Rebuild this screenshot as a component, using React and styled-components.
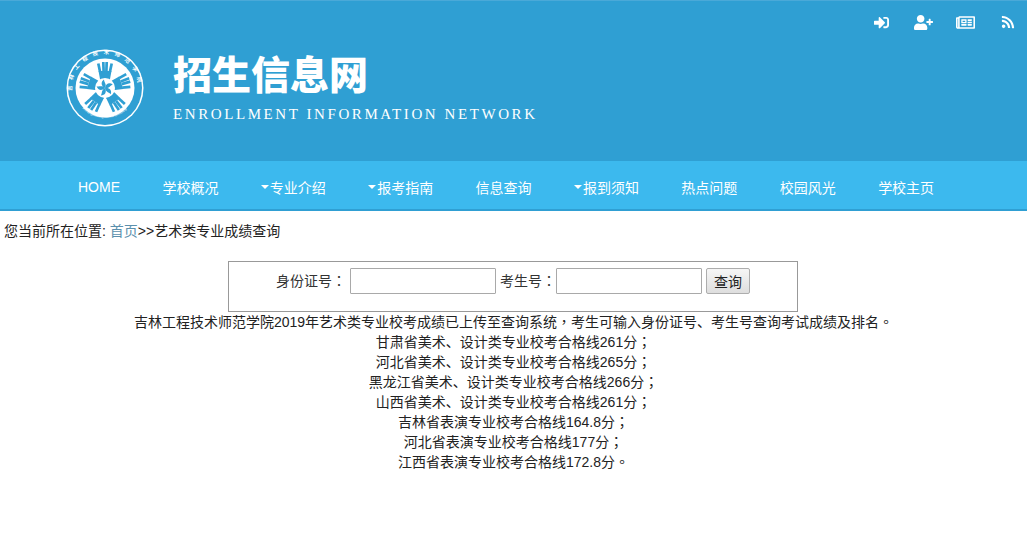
import styled, { createGlobalStyle } from "styled-components";
import { FaSignInAlt, FaUserPlus, FaRegNewspaper, FaRss } from "react-icons/fa";

const blueDark = "#2f9fd3";
const blueLight = "#3cb9ee";

const GlobalStyle = createGlobalStyle`
  body {
    margin: 0;
    background: #fff;
    color: #222;
    font-family: "Liberation Sans", "Noto Sans CJK SC", sans-serif;
    font-size: 14px;
  }
`;

const Header = styled.header`
  box-sizing: border-box;
  height: 161px;
  padding-top: 1px;
  background: ${blueDark};
  border-top: 1px solid #4aa9d8;
`;

const TopIcons = styled.div`
  display: flex;
  justify-content: flex-end;
  align-items: center;
  height: 40px;
  color: #fff;
`;

const TopIcon = styled.a`
  display: flex;
  justify-content: center;
  width: ${(p) => p.$w}px;
  font-size: ${(p) => p.$size || 16}px;
`;

const Brand = styled.div`
  display: flex;
  align-items: flex-start;
  padding: 7px 0 0 66px;
`;

const BrandText = styled.div`
  margin-left: 29px;
  color: #fff;
`;

const BrandTitle = styled.h1`
  margin: -2px 0 0;
  font-family: "Noto Sans CJK SC", sans-serif;
  font-size: 39px;
  line-height: 50px;
  font-weight: 900;
`;

const BrandSub = styled.div`
  margin-top: 8px;
  font-family: "Liberation Serif", serif;
  font-size: 15px;
  line-height: 18px;
  letter-spacing: 2.58px;
  white-space: nowrap;
`;

const Nav = styled.nav`
  box-sizing: border-box;
  display: flex;
  align-items: center;
  gap: 42.4px;
  height: 50px;
  padding: 3px 0 0 78px;
  background: ${blueLight};
  border-bottom: 2px solid ${blueDark};
`;

const NavItem = styled.a`
  display: flex;
  align-items: center;
  color: #fff;
  font-size: 14px;
  white-space: nowrap;
`;

const Caret = styled.i`
  width: 0;
  height: 0;
  margin-right: 1px;
  border-left: 4px solid transparent;
  border-right: 4px solid transparent;
  border-top: 4px solid #fff;
`;

const Crumbs = styled.div`
  padding: 10px 0 0 4px;
  line-height: 20px;
  font-size: 14px;
  color: #222;
`;

const CrumbLink = styled.a`
  color: #5b90ad;
`;

const SearchBox = styled.form`
  box-sizing: border-box;
  display: flex;
  align-items: flex-start;
  width: 570px;
  height: 51px;
  margin: 20px 0 0 228px;
  padding: 6px 0 0 47px;
  border: 1px solid #999;
`;

const FieldLabel = styled.label`
  line-height: 26px;
  font-size: 14px;
  color: #333;
  white-space: nowrap;
  margin-right: ${(p) => p.$gap}px;
`;

const Field = styled.input`
  box-sizing: border-box;
  width: 146px;
  height: 26px;
  margin-right: 4px;
  padding: 0 4px;
  border: 1px solid #a9a9a9;
  border-radius: 1px;
  background: #fff;
`;

const SearchButton = styled.button`
  box-sizing: border-box;
  width: 44px;
  height: 26px;
  padding: 0;
  border: 1px solid #adadad;
  border-radius: 2px;
  background: linear-gradient(#f6f6f6, #dedede);
  color: #222;
  font: inherit;
  font-size: 14px;
`;

const Notice = styled.div`
  text-align: center;
  font-size: 14px;
  line-height: 20px;
  color: #222;
`;

const NoticeLine = styled.div`
  height: 20px;
`;

// the TC cut centres full width punctuation, as the reference does
const Punct = styled.span`
  font-family: "Noto Sans CJK TC", sans-serif;
  line-height: 1;
`;

const navItems = [
  { label: "HOME" },
  { label: "学校概况" },
  { label: "专业介绍", caret: true },
  { label: "报考指南", caret: true },
  { label: "信息查询" },
  { label: "报到须知", caret: true },
  { label: "热点问题" },
  { label: "校园风光" },
  { label: "学校主页" },
];

const notices = [
  "吉林工程技术师范学院2019年艺术类专业校考成绩已上传至查询系统，考生可输入身份证号、考生号查询考试成绩及排名。",
  "甘肃省美术、设计类专业校考合格线261分；",
  "河北省美术、设计类专业校考合格线265分；",
  "黑龙江省美术、设计类专业校考合格线266分；",
  "山西省美术、设计类专业校考合格线261分；",
  "吉林省表演专业校考合格线164.8分；",
  "河北省表演专业校考合格线177分；",
  "江西省表演专业校考合格线172.8分。",
];

const withPunct = (text) =>
  text
    .split(/([，；。：])/)
    .map((part, i) => (i % 2 ? <Punct key={i}>{part}</Punct> : part));

const spokes = [0, 72, 144, 216, 288];

// one hand, fingers outward, palm narrowing to the middle of the badge
const Hand = ({ angle }) => (
  <g transform={`rotate(${angle} 39 39)`}>
    <path d="M32.5 22 h13 l-1.5 8 -3 4 h-4 l-3-4z" fill={blueDark} />
    <g stroke={blueDark} strokeWidth="2.7">
      <path d="M32.3 14.5 l1.7 8" />
      <path d="M37.3 13 l.3 9" />
      <path d="M40.7 13 l-.3 9" />
      <path d="M45.7 14.5 l-1.7 8" />
    </g>
  </g>
);

const Blade = ({ angle }) => (
  <path
    transform={`rotate(${angle} 39 39)`}
    d="M39 39 C35 37 34.5 33 38 30.5 C38 33.5 41 35 39 39z"
    fill={blueDark}
  />
);

const Logo = () => (
  <svg width="78" height="78" viewBox="0 0 78 78">
    <circle cx="39" cy="39" r="38.5" fill="#fff" />
    <circle cx="39" cy="39" r="37" fill={blueDark} />
    <circle cx="39" cy="39" r="29.5" fill="#fff" />
    <defs>
      <path id="ring-top" d="M6.5 44 A33 33 0 1 1 71.5 44" />
      <path id="ring-bottom" d="M11 52 A31.5 31.5 0 0 0 67 52" />
    </defs>
    <text fill="#fff" fontSize="5.4" fontWeight="700" fontFamily="Noto Sans CJK SC, sans-serif" letterSpacing="5.4">
      <textPath href="#ring-top" startOffset="2">吉林工程技术师范学院</textPath>
    </text>
    <text fill="#fff" fontSize="3.2" fontFamily="Liberation Sans, sans-serif">
      <textPath href="#ring-bottom" startOffset="9">Jilin Engineering Normal University</textPath>
    </text>
    {spokes.map((a) => <Hand key={a} angle={a} />)}
    <circle cx="39" cy="39" r="10" fill="#fff" />
    {spokes.map((a) => <Blade key={a} angle={a} />)}
  </svg>
);

const App = () => (
  <>
    <GlobalStyle />
    <Header>
      <TopIcons>
        <TopIcon $w={48} $size={15}><FaSignInAlt /></TopIcon>
        <TopIcon $w={36} $size={19}><FaUserPlus /></TopIcon>
        <TopIcon $w={48} $size={19}><FaRegNewspaper /></TopIcon>
        <TopIcon $w={38} $size={14}><FaRss /></TopIcon>
      </TopIcons>
      <Brand>
        <Logo />
        <BrandText>
          <BrandTitle>招生信息网</BrandTitle>
          <BrandSub>ENROLLMENT INFORMATION NETWORK</BrandSub>
        </BrandText>
      </Brand>
    </Header>
    <Nav>
      {navItems.map((item) => (
        <NavItem key={item.label}>
          {item.caret && <Caret />}
          {item.label}
        </NavItem>
      ))}
    </Nav>
    <Crumbs>
      您当前所在位置: <CrumbLink>首页</CrumbLink>&gt;&gt;艺术类专业成绩查询
    </Crumbs>
    <SearchBox>
      <FieldLabel $gap={4}>身份证号<Punct>：</Punct></FieldLabel>
      <Field />
      <FieldLabel $gap={0}>考生号<Punct>：</Punct></FieldLabel>
      <Field />
      <SearchButton type="button">查询</SearchButton>
    </SearchBox>
    <Notice>
      {notices.map((line) => (
        <NoticeLine key={line}>{withPunct(line)}</NoticeLine>
      ))}
    </Notice>
  </>
);

export default App;
